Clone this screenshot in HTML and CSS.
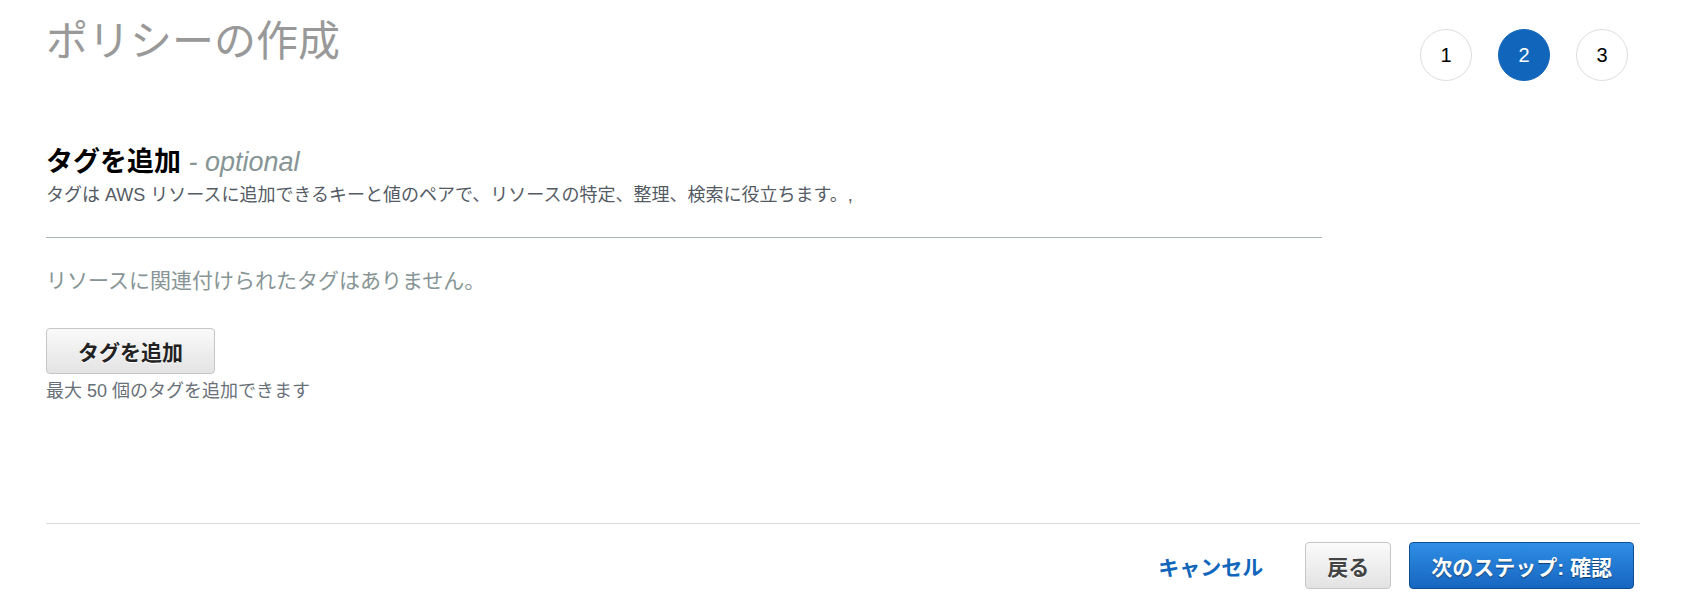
FILE: index.html
```html
<!DOCTYPE html>
<html lang="ja">
<head>
    <meta charset="UTF-8">
    <meta name="viewport" content="width=device-width, initial-scale=1.0">
    <title>ポリシーの作成</title>
    <link rel="stylesheet" href="styles.css">
</head>
<body>
    <div class="page">
        <header class="wizard-head">
            <h1>ポリシーの作成</h1>
            <ol class="steps">
                <li>1</li>
                <li class="active">2</li>
                <li>3</li>
            </ol>
        </header>

        <section class="tags">
            <div class="tags-head">
                <h2>タグを追加 <span class="optional">- optional</span></h2>
                <p class="desc">タグは AWS リソースに追加できるキーと値のペアで、リソースの特定、整理、検索に役立ちます。,</p>
            </div>
            <p class="empty">リソースに関連付けられたタグはありません。</p>
            <button class="btn btn-add">タグを追加</button>
            <p class="hint">最大 50 個のタグを追加できます</p>
        </section>

        <footer class="wizard-foot">
            <a href="#" class="cancel">キャンセル</a>
            <button class="btn btn-back">戻る</button>
            <button class="btn btn-primary">次のステップ: 確認</button>
        </footer>
    </div>
</body>
</html>
```

FILE: styles.css
```css
body {
    margin: 0;
    padding: 0;
    background: #fff;
    color: #16191f;
    font-family: "Liberation Sans", "Noto Sans CJK JP", sans-serif;
}

.page {
    min-height: 100vh;
    box-sizing: border-box;
    padding: 0 41px 0 46px;
    display: flex;
    flex-direction: column;
}

.wizard-head {
    display: flex;
    justify-content: space-between;
    align-items: flex-start;
}

h1 {
    margin: 0;
    padding-top: 17px;
    font-size: 42px;
    line-height: 50px;
    font-weight: normal;
    color: #999;
}

.steps {
    list-style: none;
    margin: 29px 12px 0 0;
    padding: 0;
    display: flex;
    gap: 26px;
}

.steps li {
    width: 52px;
    height: 52px;
    box-sizing: border-box;
    border: 1px solid #dedede;
    border-radius: 50%;
    display: flex;
    align-items: center;
    justify-content: center;
    font-size: 20px;
    color: #000;
}

.steps li.active {
    background: #1166bb;
    border-color: #1166bb;
    color: #fff;
}

.tags {
    width: 1276px;
    margin-top: 65px;
}

.tags-head {
    border-bottom: 1px solid #aab7b8;
    padding-bottom: 31px;
}

h2 {
    margin: 0 0 6px;
    font-size: 27px;
    line-height: 32px;
    font-weight: bold;
    color: #000;
}

.optional {
    font-weight: normal;
    font-style: italic;
    color: #879596;
}

.desc {
    margin: 0;
    font-size: 18px;
    line-height: 22px;
    color: #545b64;
}

.empty {
    margin: 31px 0 35px;
    font-size: 21px;
    line-height: 24px;
    color: #879596;
}

.btn {
    height: 46px;
    box-sizing: border-box;
    border: 1px solid #c6c6c6;
    border-radius: 4px;
    background: linear-gradient(#fafafa, #e3e3e3);
    color: #222;
    font-family: inherit;
    font-size: 21px;
    font-weight: bold;
    text-shadow: 0 1px 0 #fff;
    cursor: pointer;
}

.btn-add {
    padding: 0 31px;
}

.hint {
    margin: 6px 0 0;
    font-size: 18px;
    line-height: 22px;
    color: #687078;
}

.wizard-foot {
    margin-top: auto;
    border-top: 1px solid #d5dbdb;
    padding: 18px 6px 16px 0;
    display: flex;
    justify-content: flex-end;
    align-items: center;
}

.cancel {
    color: #1166bb;
    font-size: 21px;
    font-weight: bold;
    text-decoration: none;
    margin-right: 42px;
}

.wizard-foot .btn {
    height: 47px;
}

.btn-back {
    padding: 0 21px;
    color: #444;
    margin-right: 18px;
}

.btn-primary {
    padding: 0 21px;
    border-color: #0d4f94;
    background: linear-gradient(#2f8ee5, #1766c0);
    color: #fff;
    text-shadow: 0 1px 1px rgba(0, 0, 0, 0.5);
}
```
